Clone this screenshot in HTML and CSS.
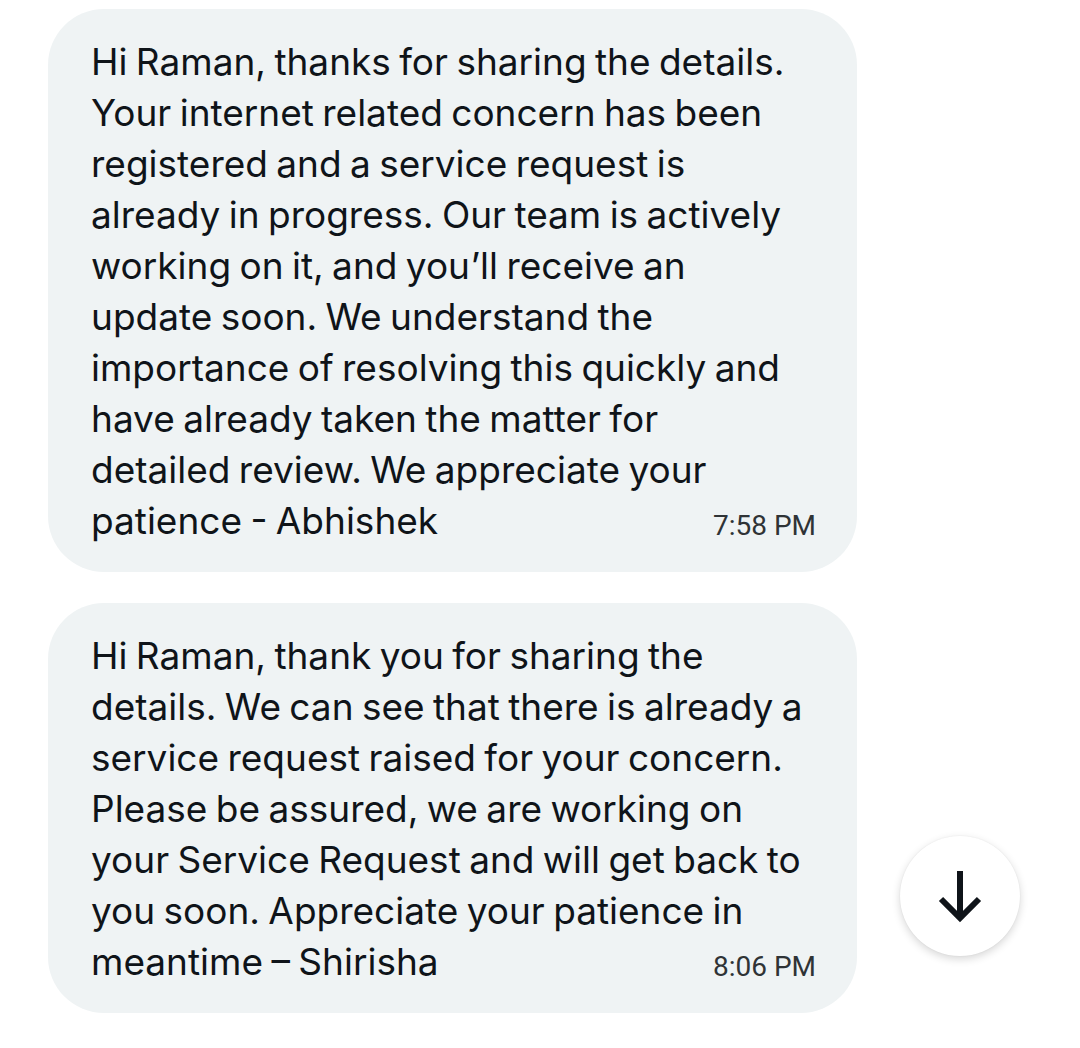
FILE: index.html
```html
<!DOCTYPE html>
<html lang="en">
<head>
  <meta charset="UTF-8">
  <title>Messages</title>
  <link rel="stylesheet" href="styles.css">
</head>
<body>

  <!-- CONVERSATION -->
  <div class="conversation">
    <div class="bubble">
      <p class="message">Hi Raman, thanks for sharing the details. Your internet related concern has been registered and a service request is already in progress. Our team is actively working on it, and you’ll receive an update soon. We understand the importance of resolving this quickly and have already taken the matter for detailed review. We appreciate your patience - Abhishek<span class="time">7:58 PM</span></p>
    </div>

    <div class="bubble">
      <p class="message">Hi Raman, thank you for sharing the details. We can see that there is already a service request raised for your concern. Please be assured, we are working on your Service Request and will get back to you soon. Appreciate your patience in meantime – Shirisha<span class="time">8:06 PM</span></p>
    </div>
  </div>

  <!-- SCROLL BUTTON -->
  <button class="scroll-down" aria-label="Scroll to bottom">
    <svg width="48" height="56" viewBox="0 0 48 56" fill="none" stroke="#0f1419" stroke-width="6">
      <path d="M24 3 V50" />
      <path d="M5 31 L24 50 L43 31" />
    </svg>
  </button>

</body>
</html>
```

FILE: styles.css
```css
body {
  margin: 0;
  background-color: #ffffff;
  font-family: Inter, 'Liberation Sans', sans-serif;
  color: #0f1419;
}

.conversation {
  display: flex;
  flex-direction: column;
  gap: 31px;
  padding: 9px 0 0 48px;
}

.bubble {
  width: 809px;
  box-sizing: border-box;
  background-color: #eff3f4;
  border-radius: 56px;
  padding: 27px 54px 26px 43px;
}

.message {
  margin: 0;
  font-size: 37px;
  line-height: 51px;
  word-spacing: -2px;
}

.time {
  float: right;
  margin: 12px -13px 0 20px;
  font-family: Roboto, 'Liberation Sans', sans-serif;
  font-size: 28px;
  line-height: 38px;
  word-spacing: 0;
  color: #2f3336;
}

.scroll-down {
  position: fixed;
  left: 900px;
  top: 836px;
  width: 120px;
  height: 120px;
  border: none;
  border-radius: 50%;
  background-color: #ffffff;
  box-shadow: 0 3px 8px rgba(0, 0, 0, 0.16), 0 0 2px rgba(0, 0, 0, 0.08);
  display: flex;
  align-items: center;
  justify-content: center;
  padding: 0;
}
```
